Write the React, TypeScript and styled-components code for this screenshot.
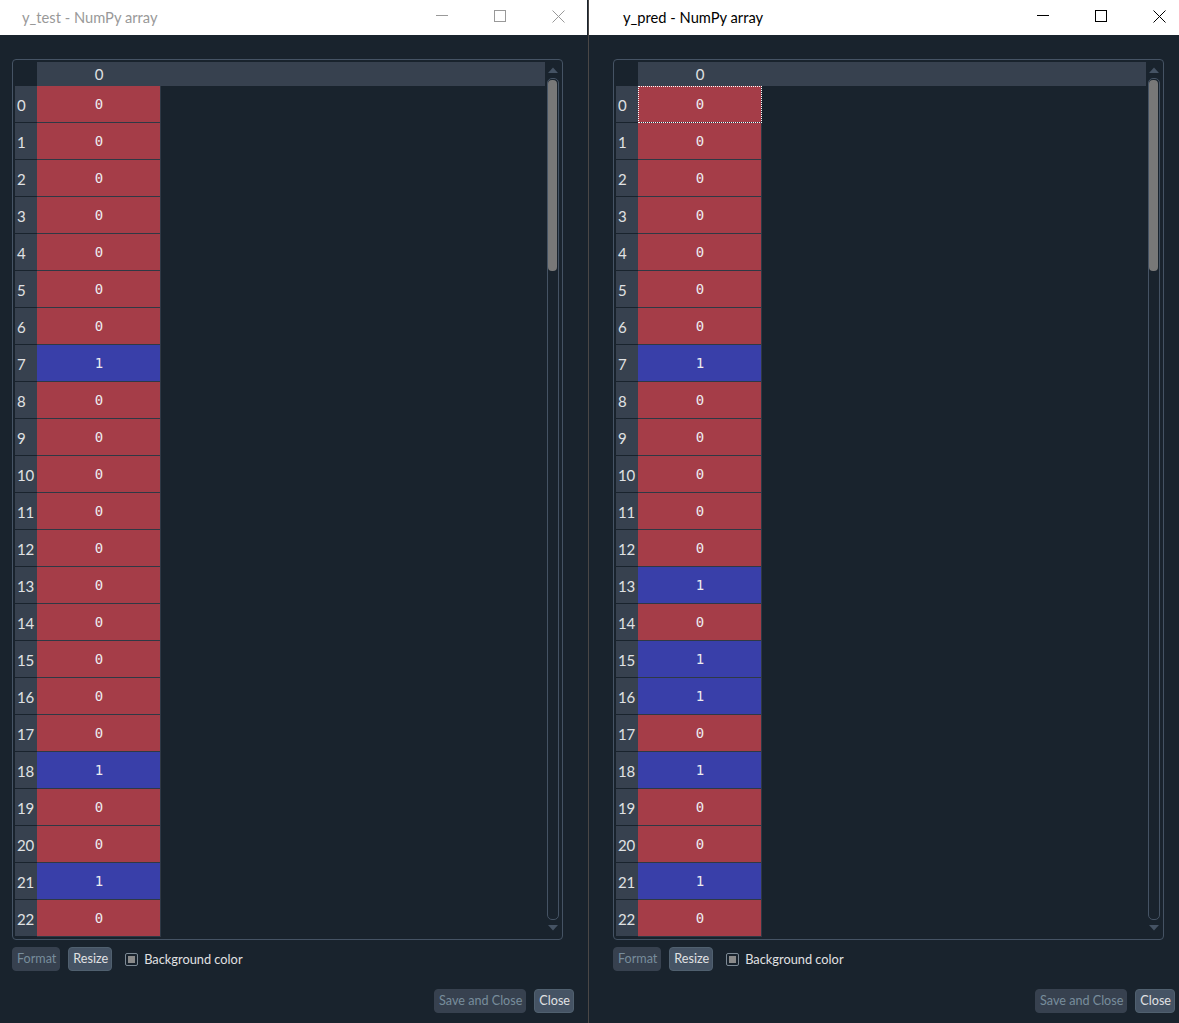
import React from 'react';
import styled, { createGlobalStyle } from 'styled-components';

const GlobalStyle = createGlobalStyle`
  html, body { margin: 0; padding: 0; background: #19232d; }
  body {
    width: 1179px;
    height: 1023px;
    overflow: hidden;
    font-family: Lato, "Noto Sans", sans-serif;
  }
`;

const Desktop = styled.div`
  display: flex;
  width: 1179px;
  height: 1023px;
  overflow: hidden;
`;

const WindowFrame = styled.div<{ $width: number; $active?: boolean }>`
  flex: none;
  width: ${p => p.$width}px;
  height: 1023px;
  overflow: hidden;
  box-sizing: border-box;
  border-left: ${p => (p.$active ? '1px solid #4a4746' : 'none')};
`;

const WindowInner = styled.div<{ $shift: number }>`
  width: 599px;
  height: 100%;
  margin-left: ${p => p.$shift}px;
  display: flex;
  flex-direction: column;
`;

const TitleBar = styled.div`
  flex: none;
  height: 35px;
  background: #ffffff;
  display: flex;
  align-items: flex-start;
`;

const Title = styled.div<{ $active?: boolean }>`
  flex: 1;
  padding-left: 34px;
  line-height: 34px;
  font-size: 14.7px;
  color: ${p => (p.$active ? '#000000' : '#999999')};
  white-space: nowrap;
`;

const Controls = styled.div`
  display: flex;
`;

const ControlButton = styled.div`
  width: 58px;
  height: 35px;
  display: flex;
  justify-content: center;
  padding-top: 10px;
  box-sizing: border-box;
`;

const Body = styled.div`
  flex: 1;
  background: #19232d;
  padding: 24px 13px 10px 24px;
  display: flex;
  flex-direction: column;
`;

const TableFrame = styled.div`
  width: 551px;
  height: 881px;
  box-sizing: border-box;
  border: 1px solid #455364;
  border-radius: 4px;
  padding: 2px 1px 2px 2px;
  display: flex;
`;

const Table = styled.div`
  width: 530px;
  display: flex;
  flex-direction: column;
  overflow: hidden;
`;

const HeaderRow = styled.div`
  display: flex;
  height: 24px;
  flex: none;
`;

const Corner = styled.div`
  width: 22px;
  flex: none;
`;

const HeaderBar = styled.div`
  flex: 1;
  background: #37414f;
  display: flex;
`;

const HeaderCell = styled.div`
  width: 124px;
  text-align: center;
  line-height: 24px;
  font-size: 15px;
  color: #e0e1e3;
`;

const Row = styled.div`
  display: flex;
  height: 37px;
  flex: none;
`;

const RowLabel = styled.div`
  width: 22px;
  flex: none;
  box-sizing: border-box;
  background: #37414f;
  border-bottom: 1px solid #19232d;
  padding: 1px 0 0 2px;
  line-height: 36px;
  font-size: 15px;
  color: #e0e1e3;
  letter-spacing: -0.3px;
`;

const Cell = styled.div<{ $value: number; $focused?: boolean }>`
  width: 124px;
  flex: none;
  box-sizing: border-box;
  background: ${p => (p.$value ? '#393fa9' : '#a53d48')};
  border-right: 1px solid #2f3945;
  border-bottom: 1px solid #2f3945;
  padding-left: 1px;
  text-align: center;
  line-height: 36px;
  font-family: "DejaVu Sans Mono", "Liberation Mono", monospace;
  font-size: 14px;
  color: #ecebf0;
  outline: ${p => (p.$focused ? '1px dotted #ffffff' : 'none')};
  outline-offset: -1px;
`;

const ScrollBar = styled.div`
  width: 16px;
  flex: none;
  box-sizing: border-box;
  padding-left: 2px;
  display: flex;
  flex-direction: column;
`;

const ArrowBox = styled.div`
  width: 12px;
  height: 16px;
  flex: none;
  display: flex;
  align-items: center;
  justify-content: center;
`;

const Track = styled.div`
  width: 12px;
  height: 842px;
  flex: none;
  box-sizing: border-box;
  border: 1px solid #455364;
  border-radius: 5px;
  padding: 1px 1px 0 0;
`;

const Handle = styled.div`
  width: 9px;
  height: 191px;
  background: #787878;
  border-radius: 4px;
`;

const Toolbar = styled.div`
  margin-top: 7px;
  height: 24px;
  display: flex;
  align-items: center;
`;

const Button = styled.div<{ $disabled?: boolean }>`
  height: 24px;
  box-sizing: border-box;
  padding: 0 3px 0 4px;
  border-radius: 4px;
  border: 1px solid ${p => (p.$disabled ? '#37414f' : '#50606f')};
  background: ${p => (p.$disabled ? '#37414f' : '#455364')};
  color: ${p => (p.$disabled ? '#788d9c' : '#e0e1e3')};
  font-size: 12.6px;
  line-height: 22px;
  white-space: nowrap;
`;

const CheckBox = styled.div`
  margin-left: 13px;
  width: 13px;
  height: 13px;
  box-sizing: border-box;
  border: 1px solid #7d8a96;
  border-radius: 2px;
  padding: 2px;
  display: flex;
`;

const CheckFill = styled.div`
  flex: 1;
  background: #8a8a8a;
`;

const CheckLabel = styled.div`
  margin-left: 6px;
  font-size: 12.8px;
  color: #e0e1e3;
`;

const Gap = styled.div`
  width: 8px;
  flex: none;
`;

const ButtonRow = styled.div`
  margin-top: 18px;
  height: 24px;
  display: flex;
  justify-content: flex-end;
  gap: 8px;
`;

const WinIcon = ({ kind, color }: { kind: 'min' | 'max' | 'close'; color: string }) => (
  <svg width="13" height="13" viewBox="0 0 13 13" fill="none" stroke={color} strokeWidth="1" shapeRendering="crispEdges">
    {kind === 'min' && <line x1="0" y1="5.5" x2="12" y2="5.5" />}
    {kind === 'max' && <rect x="0.5" y="0.5" width="11" height="11" />}
    {kind === 'close' && (
      <g shapeRendering="geometricPrecision">
        <line x1="0.5" y1="0.5" x2="12.5" y2="12.5" />
        <line x1="12.5" y1="0.5" x2="0.5" y2="12.5" />
      </g>
    )}
  </svg>
);

const Arrow = ({ up }: { up?: boolean }) => (
  <svg width="10" height="6" viewBox="0 0 10 6">
    <polygon points={up ? '0,6 5,0.5 10,6' : '0,0 5,5.5 10,0'} fill="#455364" />
  </svg>
);

type WindowProps = {
  title: string;
  active?: boolean;
  width: number;
  shift: number;
  data: number[];
};

const ArrayWindow = ({ title, active, width, shift, data }: WindowProps) => {
  const ctl = active ? '#000000' : '#999999';
  return (
    <WindowFrame $width={width} $active={active}>
      <WindowInner $shift={shift}>
        <TitleBar>
          <Title $active={active}>{title}</Title>
          <Controls>
            <ControlButton><WinIcon kind="min" color={ctl} /></ControlButton>
            <ControlButton><WinIcon kind="max" color={ctl} /></ControlButton>
            <ControlButton><WinIcon kind="close" color={ctl} /></ControlButton>
          </Controls>
        </TitleBar>
        <Body>
          <TableFrame>
            <Table>
              <HeaderRow>
                <Corner />
                <HeaderBar>
                  <HeaderCell>0</HeaderCell>
                </HeaderBar>
              </HeaderRow>
              {data.map((v, i) => (
                <Row key={i}>
                  <RowLabel>{i}</RowLabel>
                  <Cell $value={v} $focused={active && i === 0}>{v}</Cell>
                </Row>
              ))}
            </Table>
            <ScrollBar>
              <ArrowBox><Arrow up /></ArrowBox>
              <Track><Handle /></Track>
              <ArrowBox><Arrow /></ArrowBox>
            </ScrollBar>
          </TableFrame>
          <Toolbar>
            <Button $disabled>Format</Button>
            <Gap />
            <Button>Resize</Button>
            <CheckBox><CheckFill /></CheckBox>
            <CheckLabel>Background color</CheckLabel>
          </Toolbar>
          <ButtonRow>
            <Button $disabled>Save and Close</Button>
            <Button>Close</Button>
          </ButtonRow>
        </Body>
      </WindowInner>
    </WindowFrame>
  );
};

const ones = (idx: number[]) => Array.from({ length: 23 }, (_, i) => (idx.includes(i) ? 1 : 0));

const yTest = ones([7, 18, 21]);
const yPred = ones([7, 13, 15, 16, 18, 21]);

export default function App() {
  return (
    <>
      <GlobalStyle />
      <Desktop>
        <ArrayWindow title="y_test - NumPy array" width={588} shift={-12} data={yTest} />
        <ArrayWindow title="y_pred - NumPy array" width={591} shift={0} data={yPred} active />
      </Desktop>
    </>
  );
}
